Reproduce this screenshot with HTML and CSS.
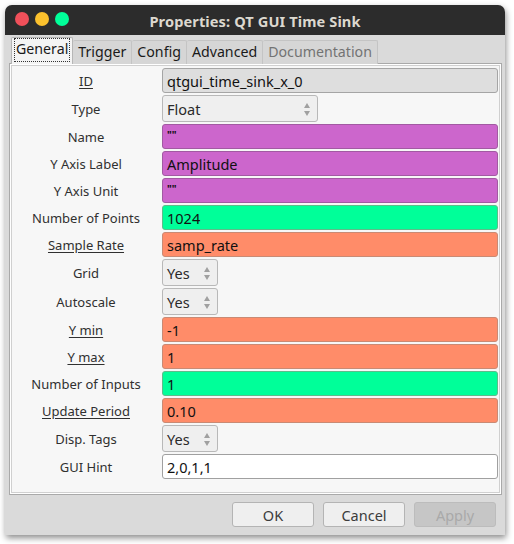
FILE: index.html
```html
<!DOCTYPE html>
<html>
<head>
<meta charset="utf-8">
<link rel="stylesheet" href="styles.css">
</head>
<body>
<div class="window">
  <div class="titlebar">
    <div class="lights">
      <span class="light red"></span>
      <span class="light yellow"></span>
      <span class="light green"></span>
    </div>
    <div class="title">Properties: QT GUI Time Sink</div>
  </div>
  <div class="body">
    <div class="tabs">
      <div class="tab active"><span class="focus">General</span></div>
      <div class="tab">Trigger</div>
      <div class="tab">Config</div>
      <div class="tab">Advanced</div>
      <div class="tab disabled">Documentation</div>
    </div>
    <div class="pane">
      <div class="form">
        <div class="label"><u>ID</u></div>
        <div class="field le grey">qtgui_time_sink_x_0</div>

        <div class="label">Type</div>
        <div class="field combo wide">Float<span class="spin"><i class="up"></i><i class="down"></i></span></div>

        <div class="label">Name</div>
        <div class="field le magenta q">""</div>

        <div class="label">Y Axis Label</div>
        <div class="field le magenta">Amplitude</div>

        <div class="label">Y Axis Unit</div>
        <div class="field le magenta q">""</div>

        <div class="label">Number of Points</div>
        <div class="field le green">1024</div>

        <div class="label"><u>Sample Rate</u></div>
        <div class="field le salmon">samp_rate</div>

        <div class="label">Grid</div>
        <div class="field combo narrow">Yes<span class="spin"><i class="up"></i><i class="down"></i></span></div>

        <div class="label">Autoscale</div>
        <div class="field combo narrow">Yes<span class="spin"><i class="up"></i><i class="down"></i></span></div>

        <div class="label"><u>Y min</u></div>
        <div class="field le salmon">-1</div>

        <div class="label"><u>Y max</u></div>
        <div class="field le salmon">1</div>

        <div class="label">Number of Inputs</div>
        <div class="field le green">1</div>

        <div class="label"><u>Update Period</u></div>
        <div class="field le salmon">0.10</div>

        <div class="label">Disp. Tags</div>
        <div class="field combo narrow">Yes<span class="spin"><i class="up"></i><i class="down"></i></span></div>

        <div class="label">GUI Hint</div>
        <div class="field le white">2,0,1,1</div>
      </div>
    </div>
    <div class="buttons">
      <div class="btn">OK</div>
      <div class="btn">Cancel</div>
      <div class="btn off">Apply</div>
    </div>
  </div>
</div>
</body>
</html>
```
FILE: styles.css
```css
* { box-sizing: border-box; }
html, body { margin: 0; padding: 0; background: #ffffff; }
body {
  font-family: "Noto Sans", "DejaVu Sans", sans-serif;
  width: 514px;
  height: 544px;
  overflow: hidden;
}
.window {
  margin: 5px 0 0 5px;
  width: 500px;
  height: 530px;
  display: flex;
  flex-direction: column;
  border-radius: 7px 7px 0 0;
  box-shadow: 1px 3px 6px rgba(0,0,0,0.45);
  background: #dadada;
}
.titlebar {
  height: 30px;
  background: #2c2c2c;
  border-radius: 7px 7px 0 0;
  display: flex;
  align-items: center;
  position: relative;
}
.lights {
  display: flex;
  gap: 6px;
  margin-left: 10px;
  margin-top: -2px;
}
.light {
  width: 14px;
  height: 14px;
  border-radius: 50%;
  display: block;
}
.red { background: #f0505a; }
.yellow { background: #fbc12d; }
.green { background: #3ad44b; }
.title {
  position: absolute;
  left: 0;
  right: 0;
  top: 6px;
  text-align: center;
  color: #dcd8cf;
  font-weight: bold;
  font-size: 14.6px;
  letter-spacing: 0.1px;
}
.body {
  flex: 1;
  display: flex;
  flex-direction: column;
  padding: 2px 3px 8px 4px;
}
.tabs {
  display: flex;
  align-items: flex-end;
  height: 27px;
  padding-left: 2px;
  position: relative;
  z-index: 1;
}
.tab {
  height: 24px;
  padding: 0 5px;
  font-size: 14.2px;
  color: #1a1a1a;
  background: #d6d6d6;
  border: 1px solid #c4c4c4;
  border-bottom: none;
  border-left: none;
  border-radius: 2px 2px 0 0;
  display: flex;
  align-items: center;
  line-height: 1;
}
.tab.active {
  height: 27px;
  background: #f4f4f4;
  border: 1px solid #b6b6b6;
  border-bottom: none;
  padding: 0 2px 2px 2px;
}
.tab.active .focus {
  border: 1px dotted #333;
  padding: 3px 1px 4px 1px;
}
.tab.disabled { color: #737373; }
.pane {
  flex: 1;
  border: 1px solid #a9a9a9;
  box-shadow: inset 0 0 0 1px #ffffff, inset 0 0 0 2px #d0d0d0;
  background: #f7f7f7;
  margin-top: -1px;
  margin-bottom: 1px;
  padding: 4px 3px 0 2px;
}
.form {
  display: grid;
  grid-template-columns: 148px 1fr;
  column-gap: 2px;
  row-gap: 2px;
  align-items: center;
}
.label {
  text-align: center;
  font-size: 13px;
  color: #303030;
}
.label u { text-underline-offset: 2px; }
.field {
  height: 25px;
  border: 1px solid #9a9a9a;
  border-radius: 3px;
  font-size: 14.5px;
  color: #111;
  display: flex;
  align-items: center;
  padding-left: 4px;
}
.field.q { font-size: 10px; font-weight: bold; align-items: flex-start; padding-top: 3px; }
.grey { background: #dedede; border-color: #a5a5a5; }
.magenta { background: #cc66cc; border-color: #a25aa2; }
.green { background: #00ff99; }
.field.green { border-color: #5fbb8a; }
.salmon { background: #ff8c69; border-color: #c98a74; }
.white { background: #ffffff; border-color: #a0a0a0; }
.combo {
  height: 27px;
  background: #efefef;
  border-color: #b8b8b8;
  position: relative;
  color: #2a2a2a;
}
.combo.wide { width: 156px; }
.combo.narrow { width: 56px; }
.spin {
  position: absolute;
  right: 7px;
  top: 7px;
  display: flex;
  flex-direction: column;
  gap: 3px;
}
.spin i {
  display: block;
  width: 0;
  height: 0;
  border-left: 3.5px solid transparent;
  border-right: 3.5px solid transparent;
}
.spin .up { border-bottom: 5px solid #a0a0a0; }
.spin .down { border-top: 5px solid #a0a0a0; }
.buttons {
  display: flex;
  justify-content: flex-end;
  gap: 9px;
  padding: 6px 6px 0 0;
}
.btn {
  width: 82px;
  height: 25px;
  border: 1px solid #b4b4b4;
  border-radius: 3px;
  background: #efefef;
  font-size: 14.5px;
  color: #3c3c3c;
  display: flex;
  align-items: center;
  justify-content: center;
}
.btn.off {
  background: #c6c6c6;
  color: #a9a9a9;
  border-color: #bcbcbc;
}
```
